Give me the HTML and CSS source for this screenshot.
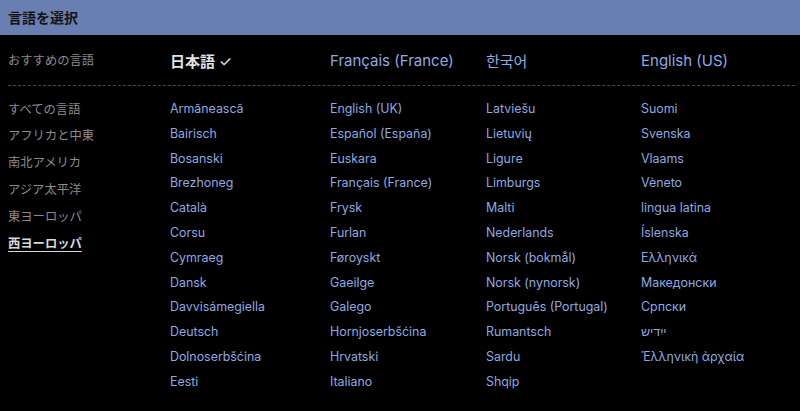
FILE: index.html
```html
<!DOCTYPE html>
<html lang="ja">
<head>
  <meta charset="UTF-8">
  <title>言語を選択</title>
  <link rel="stylesheet" href="styles.css">
</head>
<body>
  <header class="title-bar">言語を選択</header>

  <div class="picker">
    <div class="featured">
      <div class="side-label">おすすめの言語</div>
      <div class="featured-item current">日本語 <span class="check">✓</span></div>
      <div class="featured-item">Français (France)</div>
      <div class="featured-item">한국어</div>
      <div class="featured-item">English (US)</div>
    </div>

    <div class="all">
      <ul class="regions">
        <li>すべての言語</li>
        <li>アフリカと中東</li>
        <li>南北アメリカ</li>
        <li>アジア太平洋</li>
        <li>東ヨーロッパ</li>
        <li class="active">西ヨーロッパ</li>
      </ul>
      <ul class="langs">
        <li>Armãneascã</li>
        <li>Bairisch</li>
        <li>Bosanski</li>
        <li>Brezhoneg</li>
        <li>Català</li>
        <li>Corsu</li>
        <li>Cymraeg</li>
        <li>Dansk</li>
        <li>Davvisámegiella</li>
        <li>Deutsch</li>
        <li>Dolnoserbšćina</li>
        <li>Eesti</li>
      </ul>
      <ul class="langs">
        <li>English (UK)</li>
        <li>Español (España)</li>
        <li>Euskara</li>
        <li>Français (France)</li>
        <li>Frysk</li>
        <li>Furlan</li>
        <li>Føroyskt</li>
        <li>Gaeilge</li>
        <li>Galego</li>
        <li>Hornjoserbšćina</li>
        <li>Hrvatski</li>
        <li>Italiano</li>
      </ul>
      <ul class="langs">
        <li>Latviešu</li>
        <li>Lietuvių</li>
        <li>Ligure</li>
        <li>Limburgs</li>
        <li>Malti</li>
        <li>Nederlands</li>
        <li>Norsk (bokmål)</li>
        <li>Norsk (nynorsk)</li>
        <li>Português (Portugal)</li>
        <li>Rumantsch</li>
        <li>Sardu</li>
        <li>Shqip</li>
      </ul>
      <ul class="langs">
        <li>Suomi</li>
        <li>Svenska</li>
        <li>Vlaams</li>
        <li>Vèneto</li>
        <li>lingua latina</li>
        <li>Íslenska</li>
        <li>Ελληνικά</li>
        <li>Македонски</li>
        <li>Српски</li>
        <li>ייִדיש</li>
        <li>Ἑλληνικὴ ἀρχαία</li>
      </ul>
    </div>
  </div>
</body>
</html>
```

FILE: styles.css
```css
body {
  margin: 0;
  background: #000;
  font-family: Inter, "Noto Sans CJK JP", sans-serif;
  height: 411px;
  overflow: hidden;
}

.title-bar {
  height: 35px;
  line-height: 35px;
  padding-left: 8px;
  background: #6a7fb1;
  color: #141414;
  font-size: 14px;
  font-weight: 700;
}

.picker {
  padding: 0 5px 0 8px;
}

.featured,
.all {
  display: grid;
  grid-template-columns: 162px 160px 156px 155px 1fr;
}

.featured {
  height: 50px;
  align-items: center;
  border-bottom: 1px dashed #4a4a4a;
}

.side-label {
  color: #8c8c8c;
  font-size: 12.3px;
}

.featured-item {
  color: #8fa9e0;
  font-size: 15px;
}

.featured-item.current {
  color: #e2e2e2;
  font-weight: 600;
}

.check {
  font-weight: 400;
}

.all {
  padding-top: 11px;
}

ul {
  list-style: none;
  margin: 0;
  padding: 0;
}

.regions {
  margin-top: -1px;
}

.regions li {
  color: #8c8c8c;
  font-size: 12.3px;
  line-height: 27px;
}

.regions li:first-child {
  margin-bottom: -1px;
}

.regions .active {
  color: #d8d8d8;
  font-weight: 600;
  text-decoration: underline;
  text-underline-offset: 3px;
}

.langs li {
  color: #8fa9e0;
  font-size: 12.4px;
  line-height: 24.8px;
  white-space: nowrap;
}
```
